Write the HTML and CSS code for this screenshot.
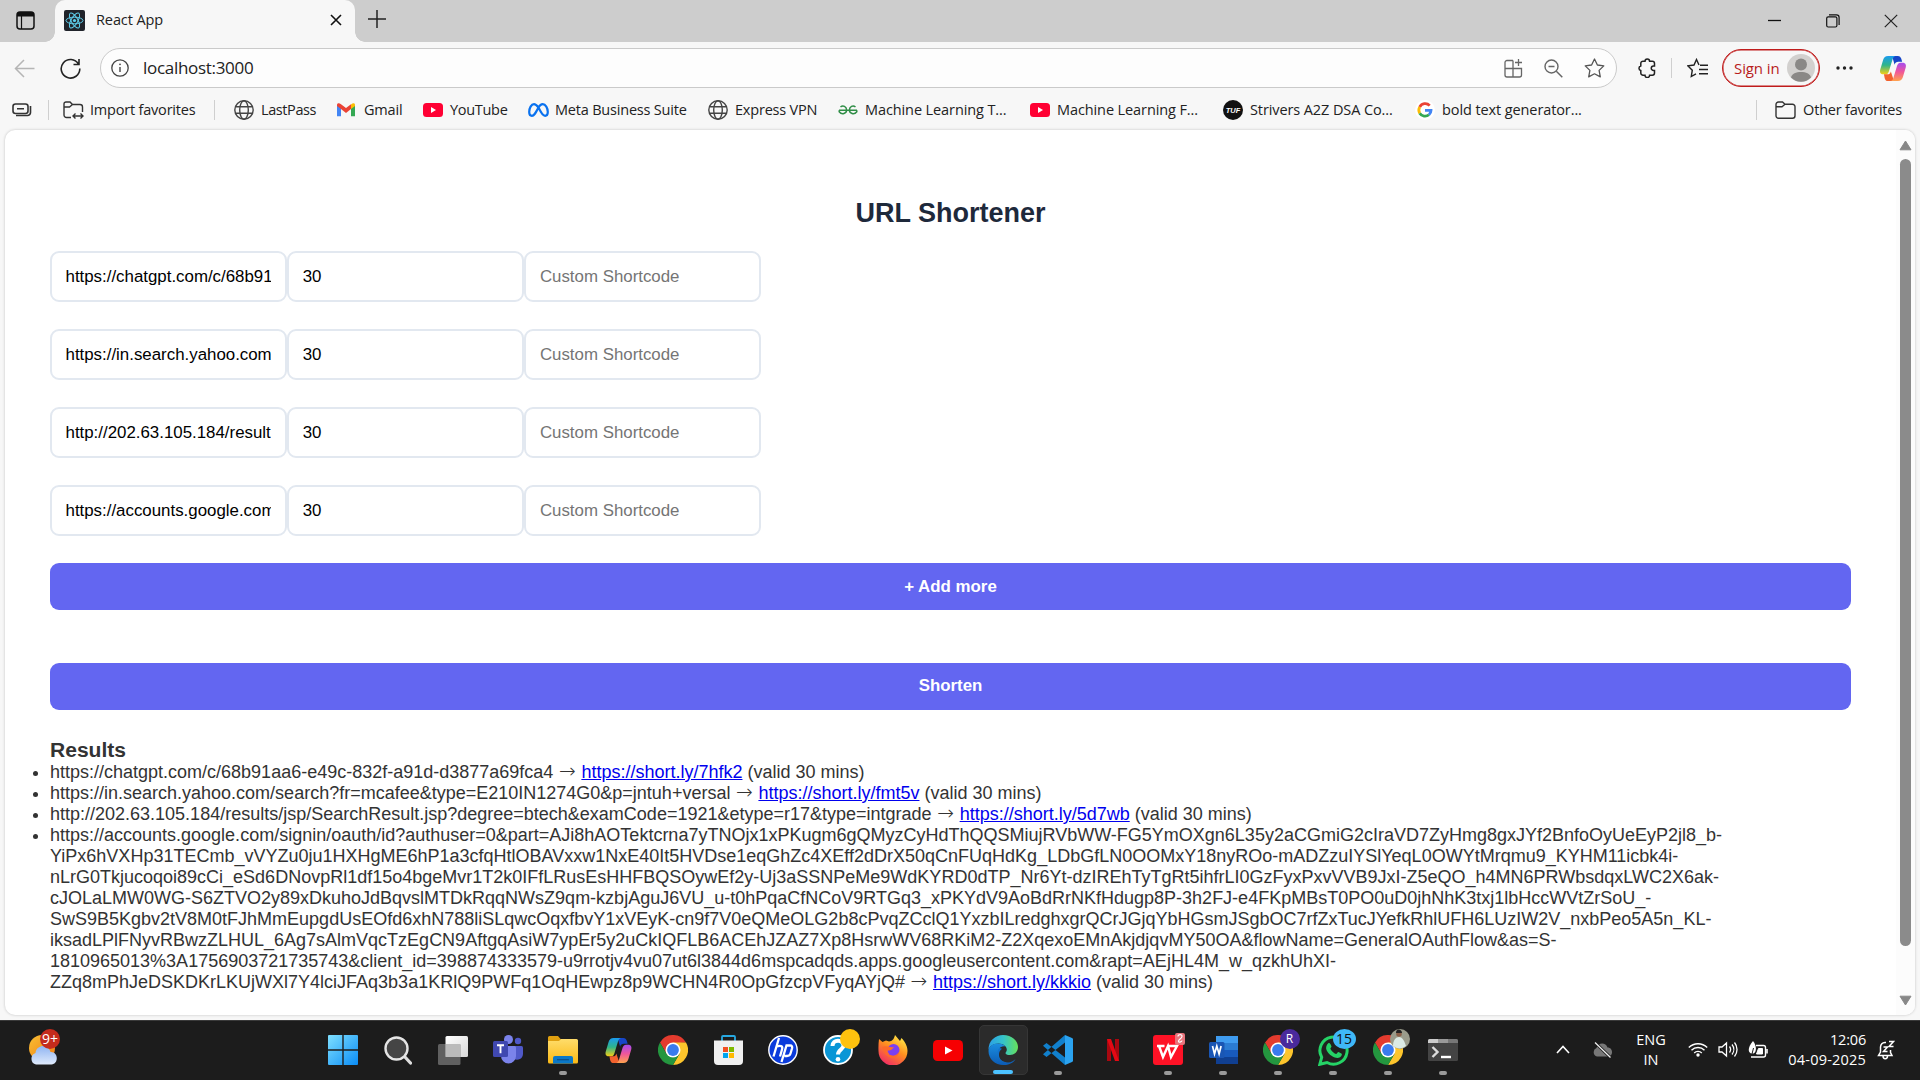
FILE: index.html
```html
<!DOCTYPE html>
<html lang="en">
<head>
<meta charset="utf-8">
<title>React App</title>
<link rel="stylesheet" href="styles.css">
</head>
<body>
<svg class="defs" width="0" height="0">
  <defs>
    <linearGradient id="cp1" x1="0" y1="0" x2="0" y2="1"><stop offset="0" stop-color="#1a9bf0"/><stop offset=".5" stop-color="#2fb58a"/><stop offset="1" stop-color="#f5cf14"/></linearGradient>
    <linearGradient id="cp2" x1="0" y1="0" x2="0" y2="1"><stop offset="0" stop-color="#a44bf0"/><stop offset=".5" stop-color="#f0569a"/><stop offset="1" stop-color="#ffa34d"/></linearGradient>
    <linearGradient id="win" x1="0" y1="0" x2="1" y2="1"><stop offset="0" stop-color="#7fe0ff"/><stop offset="1" stop-color="#0a8cf5"/></linearGradient>
    <linearGradient id="fold" x1="0" y1="0" x2="0" y2="1"><stop offset="0" stop-color="#ffdd6b"/><stop offset="1" stop-color="#fbb915"/></linearGradient>
    <linearGradient id="sun" x1="0" y1="0" x2="1" y2="1"><stop offset="0" stop-color="#f8c035"/><stop offset="1" stop-color="#f07a12"/></linearGradient>
    <linearGradient id="cloud" x1="0" y1="0" x2="0" y2="1"><stop offset="0" stop-color="#8fb4f2"/><stop offset="1" stop-color="#dfeafc"/></linearGradient>
    <linearGradient id="edg" x1="0" y1=".3" x2="1" y2=".3"><stop offset="0" stop-color="#2b9fe8"/><stop offset=".5" stop-color="#35c3ca"/><stop offset="1" stop-color="#66e05a"/></linearGradient>
    <linearGradient id="edb" x1="0" y1="0" x2="0" y2="1"><stop offset="0" stop-color="#1b8ee0"/><stop offset="1" stop-color="#0c5bb4"/></linearGradient>
    <linearGradient id="ff" x1=".8" y1="0" x2=".2" y2="1"><stop offset="0" stop-color="#fff04a"/><stop offset=".45" stop-color="#ff8f1f"/><stop offset="1" stop-color="#f0246a"/></linearGradient>
    <linearGradient id="tv" x1="0" y1="0" x2="1" y2="1"><stop offset="0" stop-color="#fff"/><stop offset="1" stop-color="#d8d8d8"/></linearGradient>
    <symbol id="copilot" viewBox="0 0 28 28">
      <path d="M13 1h6c2 0 3 1 3.600 3l.9 3h-4c-2 0-3.200 1-3.800 3L13 1z" fill="#1746c8"/>
      <path d="M9 1h7.500c-1.500.4-2.300 1.500-2.800 3l-4 13c-.7 2-1.700 3-3.500 3H4c-3 0-4-2.300-3.200-5l3-10C4.600 2.500 6 1 9 1z" fill="url(#cp1)"/>
      <path d="M15 27H9c-2 0-3-1-3.600-3L4.600 20h3.600c2 0 3-1 3.600-3L15 27z" fill="#f2622e"/>
      <path d="M19 27h-7.500c1.500-.4 2.300-1.500 2.800-3l4-13c.7-2 1.700-3 3.500-3H24c3 0 4 2.300 3.200 5l-3 10c-.8 2.500-2.200 4-5.200 4z" fill="url(#cp2)"/>
    </symbol>
    <symbol id="globe" viewBox="0 0 20 20"><g fill="none" stroke="#444" stroke-width="1.400"><circle cx="10" cy="10" r="9.200"/><ellipse cx="10" cy="10" rx="4.300" ry="9.200"/><path d="M1.600 6.700h16.800M1.600 13.300h16.800"/></g></symbol>
    <symbol id="yt" viewBox="0 0 20 14"><rect width="20" height="14" rx="3.500" fill="#ff0033"/><path d="M8 4l5 3-5 3z" fill="#fff"/></symbol>
    <symbol id="chrome" viewBox="0 0 30 30">
      <path d="M2 7.500A15 15 0 0 1 28 7.500L15 8.500 8.500 18.700z" fill="#e33b2e"/>
      <path d="M28 7.500A15 15 0 0 1 15 30L21.500 18.700 15 7.500z" fill="#fdc52c"/>
      <path d="M15 30A15 15 0 0 1 2 7.500L8.500 18.700 15 22.500 21.500 18.700z" fill="#24963f"/>
      <circle cx="15" cy="15" r="7.500" fill="#fff"/><circle cx="15" cy="15" r="5.900" fill="#3a7bee"/>
    </symbol>
  </defs>
</svg>

<div class="screen">
<header class="tabs">
  <div class="tab-actions"><svg width="19" height="19" viewBox="0 0 19 19"><rect x="1" y="1" width="17" height="17" rx="3" fill="none" stroke="#111" stroke-width="1.500"/><path d="M1 5V4a3 3 0 0 1 3-3h11a3 3 0 0 1 3 3v1.500H1z" fill="#111"/><path d="M5.500 5v13" stroke="#111" stroke-width="1.200"/></svg></div>
  <div class="tab">
    <svg class="favicon" width="21" height="21" viewBox="0 0 21 21"><rect width="21" height="21" rx="2" fill="#20232a"/><g fill="none" stroke="#5fd0ee" stroke-width="1"><ellipse cx="10.500" cy="10.500" rx="8.500" ry="3.300"/><ellipse cx="10.500" cy="10.500" rx="8.500" ry="3.300" transform="rotate(60 10.500 10.500)"/><ellipse cx="10.500" cy="10.500" rx="8.500" ry="3.300" transform="rotate(120 10.500 10.500)"/></g><circle cx="10.500" cy="10.500" r="1.600" fill="#5fd0ee"/></svg>
    <span class="tab-title">React App</span>
    <svg width="12" height="12" viewBox="0 0 12 12"><path d="M1 1l10 10M11 1L1 11" stroke="#111" stroke-width="1.600"/></svg>
  </div>
  <svg class="plus" width="18" height="18" viewBox="0 0 18 18"><path d="M9 0v18M0 9h18" stroke="#222" stroke-width="1.500"/></svg>
  <div class="win-controls">
    <svg width="14" height="14" viewBox="0 0 14 14"><path d="M0 6.500h13" stroke="#111" stroke-width="1.300"/></svg>
    <svg width="14" height="14" viewBox="0 0 14 14"><path d="M3 .8h7.500a2.600 2.600 0 0 1 2.600 2.600V11" fill="none" stroke="#111" stroke-width="1.200"/><rect x=".7" y="2.800" width="10.200" height="10.200" rx="1.500" fill="none" stroke="#111" stroke-width="1.200"/></svg>
    <svg width="14" height="14" viewBox="0 0 14 14"><path d="M.8.800l12.400 12.400M13.200.800L.8 13.200" stroke="#222" stroke-width="1.200"/></svg>
  </div>
</header>

<nav class="toolbar">
  <svg class="back" width="21" height="19" viewBox="0 0 21 19"><path d="M10 1L1.500 9.500 10 18M1.500 9.500H20.500" fill="none" stroke="#b5b5b5" stroke-width="1.500"/></svg>
  <svg class="reload" width="21" height="21" viewBox="0 0 21 21"><path d="M18.500 6A9.300 9.300 0 1 0 19.800 10.500M19 1v5.500h-5.500" fill="none" stroke="#222" stroke-width="1.600"/></svg>
  <div class="address">
    <svg width="18" height="18" viewBox="0 0 18 18"><circle cx="9" cy="9" r="8.200" fill="none" stroke="#444" stroke-width="1.300"/><path d="M9 8v5" stroke="#444" stroke-width="1.400"/><circle cx="9" cy="5.300" r=".9" fill="#444"/></svg>
    <span class="url">localhost:3000</span>
    <div class="address-icons">
      <svg width="19" height="19" viewBox="0 0 19 19"><path d="M9 1.500H3a2 2 0 0 0-2 2V16a2 2 0 0 0 2 2h12.500a2 2 0 0 0 2-2v-6.500H1M9 1.500V18M14.500 0v7M11 3.500h7" fill="none" stroke="#666" stroke-width="1.300"/></svg>
      <svg width="19" height="19" viewBox="0 0 19 19"><circle cx="7.500" cy="7.500" r="6.500" fill="none" stroke="#666" stroke-width="1.400"/><path d="M4.500 7.500h6M12.300 12.300l6 6" stroke="#666" stroke-width="1.500"/></svg>
      <svg width="21" height="20" viewBox="0 0 21 20"><path d="M10.500 1l2.900 6 6.400.9-4.700 4.500 1.200 6.500-5.800-3.100-5.800 3.100 1.200-6.500L1.200 7.900l6.400-.9z" fill="none" stroke="#555" stroke-width="1.300" stroke-linejoin="round"/></svg>
    </div>
  </div>
  <svg class="puzzle" width="20" height="20" viewBox="0 0 20 20"><path d="M8 3.200a2.300 2.300 0 0 1 4.600 0h2.700A2.200 2.200 0 0 1 17.500 5.400V8h-1a2.200 2.200 0 0 0 0 4.500h1V15a2.200 2.200 0 0 1-2.200 2.200h-2.700a2.300 2.300 0 0 1-4.600 0H6A2.200 2.200 0 0 1 3.800 15v-2.500a2.300 2.300 0 0 1 0-4.500V5.400A2.200 2.200 0 0 1 6 3.200z" fill="none" stroke="#222" stroke-width="1.500"/></svg>
  <i class="sep"></i>
  <svg class="favs" width="21" height="20" viewBox="0 0 21 20"><path d="M12 7L9.500 1.500 7 7 1 7.900l4.300 4.300-1 6.300L9 15.800M13 7.300h8M12 11.500h9M12 15.700h9" fill="none" stroke="#222" stroke-width="1.400"/></svg>
  <div class="signin"><span>Sign in</span><svg width="28" height="28" viewBox="0 0 28 28"><circle cx="14" cy="14" r="14" fill="#d2d0ce"/><circle cx="14" cy="10.500" r="6" fill="#8a8886"/><path d="M4 23.500C5 19.500 9 18 14 18s9 1.500 10 5.500a14 14 0 0 1-20 0z" fill="#8a8886"/></svg></div>
  <svg class="more" width="17" height="4" viewBox="0 0 17 4"><g fill="#222"><circle cx="2" cy="2" r="1.700"/><circle cx="8.500" cy="2" r="1.700"/><circle cx="15" cy="2" r="1.700"/></g></svg>
  <svg class="cp" width="28" height="27"><use href="#copilot"/></svg>
</nav>

<div class="bookmarks">
  <svg class="wallet" width="20" height="14" viewBox="0 0 20 14"><rect x="1" y="1" width="15" height="9.500" rx="2.500" fill="none" stroke="#333" stroke-width="1.600"/><path d="M5 5.800h7M18.500 3v6.500a3 3 0 0 1-3 3H4" fill="none" stroke="#333" stroke-width="1.600"/></svg>
  <i class="sep"></i>
  <div class="bm b1"><svg width="21" height="19" viewBox="0 0 21 19"><path d="M8 16.500H3.500a2.500 2.500 0 0 1-2.500-2.500V3a2 2 0 0 1 2-2h4l2.500 2.500H17A2.500 2.500 0 0 1 19.500 6v5M1 6h5.500L9.500 3.500" fill="none" stroke="#333" stroke-width="1.400"/><path d="M10 15h10M12.500 12.500L10 15l2.500 2.500M17.500 12.500L20 15l-2.500 2.500" fill="none" stroke="#333" stroke-width="1.400"/></svg><span>Import favorites</span></div>
  <i class="sep s2"></i>
  <div class="bm b2"><svg width="20" height="20"><use href="#globe"/></svg><span>LastPass</span></div>
  <div class="bm b3"><svg width="18" height="14" viewBox="0 0 18 14"><path d="M0 2v11.200h4V5z" fill="#4285f4"/><path d="M18 2v11.200h-4V5z" fill="#34a853"/><path d="M14 1.500V6l4-3V2c0-2-2-2.500-4-.5z" fill="#fbbc04"/><path d="M0 2C0 0 2-.5 4 1.200L9 5l5-3.800V6L9 10 4 6 0 3z" fill="#ea4335"/></svg><span>Gmail</span></div>
  <div class="bm b4"><svg width="20" height="14"><use href="#yt"/></svg><span>YouTube</span></div>
  <div class="bm b5"><svg width="21" height="14" viewBox="0 0 21 14"><path d="M10.500 4.500C8.500 2 7.300 1.200 6 1.200 3.300 1.200 1.200 5 1.200 9c0 2.500 1 3.800 2.700 3.800 2 0 3.300-2 6.600-8.300 1.300-2.300 2.700-3.300 4.200-3.300 2.800 0 5.100 3.700 5.100 7.800 0 2.500-1 3.800-2.700 3.800-2.200 0-3.600-2-6.600-8.300z" fill="none" stroke="#0a72ef" stroke-width="2.200"/></svg><span>Meta Business Suite</span></div>
  <div class="bm b6"><svg width="20" height="20"><use href="#globe"/></svg><span>Express VPN</span></div>
  <div class="bm b7"><svg width="20" height="10" viewBox="0 0 20 10"><path d="M1 5.200h18M2.500 2C5-.2 8.600 1.500 8.600 5S4 10.300 1.200 6.800V5.200M17.500 2C15-.2 11.400 1.500 11.400 5s4.600 5.300 7.400 1.800V5.200" fill="none" stroke="#2f8d46" stroke-width="1.500"/></svg><span>Machine Learning T...</span></div>
  <div class="bm b8"><svg width="20" height="14"><use href="#yt"/></svg><span>Machine Learning F...</span></div>
  <div class="bm b9"><svg width="20" height="20" viewBox="0 0 20 20"><circle cx="10" cy="10" r="10" fill="#111"/><text x="10" y="12.700" text-anchor="middle" font-family="Liberation Sans" font-weight="bold" font-style="italic" font-size="7.500" fill="#fff">TUF</text></svg><span>Strivers A2Z DSA Co...</span></div>
  <div class="bm b10"><svg width="20" height="20" viewBox="0 0 20 20"><circle cx="10" cy="10" r="10" fill="#fff"/><g fill="none" stroke-width="2.800"><path d="M14.700 5.600A6.200 6.200 0 0 0 4.700 7" stroke="#ea4335"/><path d="M4.700 7a6.200 6.200 0 0 0 0 6.200" stroke="#fbbc05"/><path d="M4.700 13.200a6.200 6.200 0 0 0 9.300 1.500" stroke="#34a853"/><path d="M14 14.700a6 6 0 0 0 2-4.300h-6" stroke="#4285f4"/></g></svg><span>bold text generator...</span></div>
  <div class="bm-end"><i class="sep"></i><svg width="21" height="18" viewBox="0 0 21 18"><path d="M1 3.500A2.500 2.500 0 0 1 3.500 1h4L10 3.200h7.500A2.500 2.500 0 0 1 20 5.700v9a2.500 2.500 0 0 1-2.500 2.500h-14A2.500 2.500 0 0 1 1 14.700zM1 5.700h6L10 3.200" fill="none" stroke="#333" stroke-width="1.400"/></svg><span>Other favorites</span></div>
</div>

<div class="viewport">
  <main class="page">
    <h2>URL Shortener</h2>
    <div class="row"><input value="https://chatgpt.com/c/68b91aa6-e49c"><input value="30"><input placeholder="Custom Shortcode"></div>
    <div class="row"><input value="https://in.search.yahoo.com/search"><input value="30"><input placeholder="Custom Shortcode"></div>
    <div class="row"><input value="http://202.63.105.184/results/jsp"><input value="30"><input placeholder="Custom Shortcode"></div>
    <div class="row"><input value="https://accounts.google.com/signin"><input value="30"><input placeholder="Custom Shortcode"></div>
    <button class="add">+ Add more</button>
    <button class="shorten">Shorten</button>
    <h3>Results</h3>
    <ul>
      <li>https://chatgpt.com/c/68b91aa6-e49c-832f-a91d-d3877a69fca4 <span class="arrow">→</span> <a href="#">https://short.ly/7hfk2</a> (valid 30 mins)</li>
      <li>https://in.search.yahoo.com/search?fr=mcafee&amp;type=E210IN1274G0&amp;p=jntuh+versal <span class="arrow">→</span> <a href="#">https://short.ly/fmt5v</a> (valid 30 mins)</li>
      <li>http://202.63.105.184/results/jsp/SearchResult.jsp?degree=btech&amp;examCode=1921&amp;etype=r17&amp;type=intgrade <span class="arrow">→</span> <a href="#">https://short.ly/5d7wb</a> (valid 30 mins)</li>
      <li>https://accounts.google.com/signin/oauth/id?authuser=0&amp;part=AJi8hAOTektcrna7yTNOjx1xPKugm6gQMyzCyHdThQQSMiujRVbWW-FG5YmOXgn6L35y2aCGmiG2cIraVD7ZyHmg8gxJYf2BnfoOyUeEyP2jl8_b-<br>YiPx6hVXHp31TECmb_vVYZu0ju1HXHgME6hP1a3cfqHtlOBAVxxw1NxE40It5HVDse1eqGhZc4XEff2dDrX50qCnFUqHdKg_LDbGfLN0OOMxY18nyROo-mADZzuIYSlYeqL0OWYtMrqmu9_KYHM11icbk4i-<br>nLrG0Tkjucoqoi89cCi_eSd6DNovpRl1df15o4bgeMvr1T2k0IFfLRusEsHHFBQSOywEf2y-Uj3aSSNPeMe9WdKYRD0dTP_Nr6Yt-dzIREhTyTgRt5ihfrLI0GzFyxPxvVVB9JxI-Z5eQO_h4MN6PRWbsdqxLWC2X6ak-<br>cJOLaLMW0WG-S6ZTVO2y89xDkuhoJdBqvslMTDkRqqNWsZ9qm-kzbjAguJ6VU_u-t0hPqaCfNCoV9RTGq3_xPKYdV9AoBdRrNKfHdugp8P-3h2FJ-e4FKpMBsT0PO0uD0jhNhK3txj1lbHccWVtZrSoU_-<br>SwS9B5Kgbv2tV8M0tFJhMmEupgdUsEOfd6xhN788liSLqwcOqxfbvY1xVEyK-cn9f7V0eQMeOLG2b8cPvqZCclQ1YxzbILredghxgrQCrJGjqYbHGsmJSgbOC7rfZxTucJYefkRhlUFH6LUzIW2V_nxbPeo5A5n_KL-<br>iksadLPlFNyvRBwzZLHUL_6Ag7sAlmVqcTzEgCN9AftgqAsiW7ypEr5y2uCkIQFLB6ACEhJZAZ7Xp8HsrwWV68RKiM2-Z2XqexoEMnAkjdjqvMY50OA&amp;flowName=GeneralOAuthFlow&amp;as=S-<br>1810965013%3A1756903721735743&amp;client_id=398874333579-u9rrotjv4vu07ut6l3844d6mspcadqds.apps.googleusercontent.com&amp;rapt=AEjHL4M_w_qzkhUhXI-<br>ZZq8mPhJeDSKDKrLKUjWXl7Y4lciJFAq3b3a1KRlQ9PWFq1OqHEwpz8p9WCHN4R0OpGfzcpVFyqAYjQ# <span class="arrow">→</span> <a href="#">https://short.ly/kkkio</a> (valid 30 mins)</li>
    </ul>
  </main>
  <div class="scrollbar">
    <svg width="13" height="11" viewBox="0 0 13 11"><path d="M6.500 1L12 9.800H1z" fill="#888" stroke="#888" stroke-linejoin="round"/></svg>
    <i class="thumb"></i>
    <svg width="13" height="11" viewBox="0 0 13 11"><path d="M6.500 10L12 1.200H1z" fill="#888" stroke="#888" stroke-linejoin="round"/></svg>
  </div>
</div>

<footer class="taskbar">
  <div class="weather"><svg width="34" height="38" viewBox="0 0 34 38"><circle cx="13" cy="21" r="13" fill="url(#sun)"/><path d="M7 37.500a6 6 0 0 1-.5-11.500C7 21 11 19 14 19s6.500 2 7.500 6c8-.5 8.500 12 1 12.500z" fill="url(#cloud)"/></svg><span class="badge red">9+</span></div>
  <div class="apps">
    <div class="app"><svg width="30" height="30" viewBox="0 0 30 30"><path d="M0 1a1 1 0 0 1 1-1h13.300v14.300H0zM15.700 0H29a1 1 0 0 1 1 1v13.300H15.700zM0 15.700h14.300V30H1a1 1 0 0 1-1-1zM15.700 15.700H30V29a1 1 0 0 1-1 1H15.700z" fill="url(#win)"/></svg></div>
    <div class="app"><svg width="28" height="29" viewBox="0 0 28 29"><path d="M20 20l6.500 7" stroke="#ddd" stroke-width="3.300" stroke-linecap="round"/><circle cx="12.500" cy="12.500" r="11" fill="#454545" stroke="#e5e5e5" stroke-width="2.400"/></svg></div>
    <div class="app"><svg width="30" height="29" viewBox="0 0 30 29"><rect x="7.500" y="0" width="22.500" height="21" rx="1.500" fill="url(#tv)"/><rect x="0" y="8" width="22.500" height="21" rx="1.500" fill="#777" fill-opacity=".75"/><path d="M7.500 8h15v13h-15z" fill="#bbb"/></svg></div>
    <div class="app"><svg width="30" height="32" viewBox="0 0 30 32"><circle cx="25" cy="7" r="3.200" fill="#5059c9"/><circle cx="15.500" cy="5.500" r="4.500" fill="#7b83eb"/><path d="M20 12h8.500a1.500 1.500 0 0 1 1.500 1.500V20a6 6 0 0 1-9 5z" fill="#5059c9"/><path d="M8 12h13.500a1.500 1.500 0 0 1 1.500 1.500V22a7.500 7.500 0 0 1-15 0z" fill="#7b83eb"/><rect y="7" width="15" height="16" rx="1.500" fill="#4048b0"/><path d="M4 11.200h7M7.500 11.200v8" stroke="#fff" stroke-width="1.900"/></svg></div>
    <div class="app run"><svg width="30" height="28" viewBox="0 0 30 28"><path d="M0 1.500A1.500 1.500 0 0 1 1.500 0H10l3 3.500V9H0z" fill="#e0a010"/><path d="M0 5h11l2-2h15.500A1.500 1.500 0 0 1 30 4.500V26a1.500 1.500 0 0 1-1.500 1.500h-27A1.500 1.500 0 0 1 0 26z" fill="url(#fold)"/><path d="M5 27.500V22a2 2 0 0 1 2-2h16a2 2 0 0 1 2 2v5.500z" fill="#0a78c8"/><path d="M9 23.700h12" stroke="#0c4f88" stroke-width="1.200"/></svg></div>
    <div class="app"><svg width="29" height="27"><use href="#copilot"/></svg></div>
    <div class="app"><svg width="30" height="30"><use href="#chrome"/></svg></div>
    <div class="app"><svg width="29" height="30" viewBox="0 0 29 30"><path d="M8 6V2a1 1 0 0 1 1-1h11a1 1 0 0 1 1 1v4" fill="none" stroke="#27a9e1" stroke-width="1.800"/><path d="M0 5.500h29V26a4 4 0 0 1-4 4H4a4 4 0 0 1-4-4z" fill="#f0f0f0"/><path d="M9 12h5v5H9z" fill="#f25022"/><path d="M15 12h5v5h-5z" fill="#7fba00"/><path d="M9 18h5v5H9z" fill="#00a4ef"/><path d="M15 18h5v5h-5z" fill="#ffb900"/></svg></div>
    <div class="app"><svg width="30" height="30" viewBox="0 0 30 30"><circle cx="15" cy="15" r="14.200" fill="#0b3bdc" stroke="#fff" stroke-width="1.400"/><path d="M11 3L5.500 21.500M8.500 11.500c5-1.500 6.500 0 5.500 3L12 21.500M13.500 27l5-16.500h3.500c2 0 2.500 1 2 3l-1.500 5c-.5 1.800-1.500 2.500-3.500 2.500h-2.500" fill="none" stroke="#fff" stroke-width="2.300"/></svg></div>
    <div class="app"><svg width="30" height="30" viewBox="0 0 30 30"><circle cx="15" cy="15" r="14" fill="#0a96d6" stroke="#fff" stroke-width="1.800"/><path d="M9.500 11c0-7 11-7 11-.5 0 4-5.500 4-5.500 9" fill="none" stroke="#fff" stroke-width="4"/><circle cx="15" cy="24.300" r="2.300" fill="#fff"/></svg><span class="badge amber"></span></div>
    <div class="app"><svg width="30" height="30" viewBox="0 0 30 30"><path d="M1 4l3.500 3L8 5.500l3 1C14 6 16 4.500 17 0l5 6 1.500-3C28 8 29.500 12 29.500 16a14.300 14.300 0 0 1-29 0C.3 12 .5 8 1 4z" fill="url(#ff)"/><circle cx="15.500" cy="15" r="6" fill="#7b3ff2"/><path d="M4 12c5-2 7 1 12 0-3 5-7 3-8 4 2 6 10 6 13 1-1 8-13 9-17-5z" fill="#ff6a2a"/></svg></div>
    <div class="app"><svg width="30" height="21" viewBox="0 0 30 21"><rect width="30" height="21" rx="4.500" fill="#f60002"/><path d="M12 6.500l7.500 4-7.500 4z" fill="#fff"/></svg></div>
    <div class="app active"><svg width="30" height="30" viewBox="0 0 30 30"><path d="M1 15A14.500 14.500 0 0 0 22 28c-7 1-11-4-11-8 0-5 3-6 3-6S3 8 1 15z" fill="#1173cf"/><path d="M.5 16C0 5 8 0 15 0c9 0 15 6 15 12 0 5-4 8-8 8-3 0-4.500-1-4.500-1.800 0-1 1.300-1.400 1.300-3.700 0-3-3.500-6-8.300-6C5 8.500.5 12 .5 16z" fill="url(#edg)"/><path d="M.5 16C1 11 5 8.500 10 8.500c3 0 6 1 7.500 3C12 10.500 9.500 15 9.500 18c0 6 5.500 9.500 10.500 9.500 3.500 0 6-2 7.500-3.500-2 4-7 6-12 6C7 30 .5 24 .5 16z" fill="url(#edb)"/></svg></div>
    <div class="app run"><svg width="30" height="30" viewBox="0 0 30 30"><path d="M22 0l7 3a1.500 1.500 0 0 1 1 1.500v21a1.500 1.500 0 0 1-1 1.500l-7 3z" fill="#2ba3f0"/><path d="M22 7.500L3.500 22 0 19.300 22 0zM22 22.500L3.500 8 0 10.700 22 30z" fill="#1180cc"/></svg></div>
    <div class="app"><svg width="12" height="22" viewBox="0 0 12 22"><path d="M0 0h4v22H0zM8 0h4v22H8z" fill="#a90810"/><path d="M0 0h4l8 22H8z" fill="#e50914"/></svg></div>
    <div class="app run"><svg width="30" height="30" viewBox="0 0 30 30"><rect width="30" height="30" rx="3" fill="#ff1226"/><path d="M4 11h7.500M6 11l4 11 5-11 3 11 6-11h-9" fill="none" stroke="#fff" stroke-width="2.400"/></svg><span class="wps"><svg width="10" height="12" viewBox="0 0 10 12"><path d="M3 3.500C3 1 7.500 1 7 3.500S4 6 3.500 8 7 9 7 7.500" fill="none" stroke="#fff" stroke-width="1.200"/></svg></span></div>
    <div class="app run"><svg width="29" height="28" viewBox="0 0 29 28"><path d="M7 0h22v7H7z" fill="#3f9cf0"/><path d="M7 7h22v7H7z" fill="#2b7cd3"/><path d="M7 14h22v7H7z" fill="#185abd"/><path d="M7 21h22v7H7z" fill="#103f91"/><rect y="6" width="15.500" height="16" rx="1.500" fill="#1a56b4"/><path d="M3.500 10l2 8 2.300-8 2.300 8 2-8" fill="none" stroke="#fff" stroke-width="1.700"/></svg></div>
    <div class="app run"><svg width="30" height="30"><use href="#chrome"/></svg><span class="badge purple">R</span></div>
    <div class="app run"><svg width="31" height="31" viewBox="0 0 31 31"><path d="M1.800 29.300l1.900-7A13.600 13.600 0 1 1 9 27.500z" fill="#20221f" stroke="#25d366" stroke-width="3"/><path d="M10 8.500c1.500-1.300 2.500 0 3.500 3-.5 1.500-1.500 1.500-1 2.500 1.500 2.500 3 4 5.500 5 1 0 1.500-2 2.500-2 3 1.500 3.700 1.800 3.300 3-1 3-4.300 3.500-7 2.500-5-2-7-5-8.300-7.500-1-2.500 0-5 1.500-6.500z" fill="#25d366"/></svg><span class="badge blue">15</span></div>
    <div class="app run"><svg width="30" height="30"><use href="#chrome"/></svg><span class="badge photo"><svg width="20" height="20" viewBox="0 0 20 20"><circle cx="10" cy="10" r="10" fill="#9a9c8b"/><path d="M3 17c0-6 3-9 6-9s5 3 7 9a10 10 0 0 1-13 0z" fill="#dcebe5"/><circle cx="9" cy="5" r="2.800" fill="#8b6048"/><path d="M6 4c0-5 6-4 6 0z" fill="#222"/></svg></span></div>
    <div class="app run"><svg width="30" height="22" viewBox="0 0 30 22"><rect width="30" height="22" rx="1.500" fill="#444"/><path d="M0 4V1.500A1.500 1.500 0 0 1 1.500 0H10v4z" fill="#ccc"/><path d="M10 0h10v4H10z" fill="#999"/><path d="M20 0h8.500A1.500 1.500 0 0 1 30 1.500V4H20z" fill="#777"/><path d="M4.500 8l5 5-5 5" fill="none" stroke="#ddd" stroke-width="2.400"/><path d="M13 18h10" stroke="#fff" stroke-width="2.400"/></svg></div>
  </div>
  <div class="tray">
    <svg class="chev" width="14" height="9" viewBox="0 0 14 9"><path d="M1 8l6-6.500L13 8" fill="none" stroke="#fff" stroke-width="1.600"/></svg>
    <svg class="cloud" width="21" height="16" viewBox="0 0 21 16"><path d="M5 14.500a4.500 4.500 0 0 1-.5-8.500C6 0 14 0 15.500 5.500c6 0 6 9 .5 9z" fill="#777"/><path d="M3 .5L18.500 15.500" stroke="#1c1c1c" stroke-width="3"/><path d="M3 .5L18.500 15.500" stroke="#eee" stroke-width="1.300"/></svg>
    <div class="lang"><span>ENG</span><span>IN</span></div>
    <svg class="wifi" width="20" height="15" viewBox="0 0 20 15"><g fill="none" stroke="#fff" stroke-width="1.400"><path d="M.8 5.500a13 13 0 0 1 18.400 0M3.500 8.200a9.200 9.200 0 0 1 13 0M6.200 10.900a5.400 5.400 0 0 1 7.600 0"/></g><circle cx="10" cy="13" r="1.700" fill="#fff"/></svg>
    <svg class="vol" width="21" height="17" viewBox="0 0 21 17"><path d="M1 6v5h3l4.500 4V2L4 6zM11.500 5.500a5 5 0 0 1 0 6M14 3.500a8 8 0 0 1 0 10M16.500 1.500a11 11 0 0 1 0 14" fill="none" stroke="#fff" stroke-width="1.300"/></svg>
    <svg class="bat" width="20" height="18" viewBox="0 0 20 18"><path d="M8 4.500h7.500a2 2 0 0 1 2 2v7.500a2 2 0 0 1-2 2H3" fill="none" stroke="#fff" stroke-width="1.400"/><path d="M19 8v4.500" stroke="#fff" stroke-width="1.600"/><path d="M10.500 7.500h4v5.500H8.500z" fill="#fff" stroke="#fff"/><path d="M5 0C8.500 4 9 11 5.500 12.500H3C-.5 11 0 6 5 0z" fill="#fff"/><path d="M3.500 15l2-8" stroke="#1c1c1c" stroke-width="1"/></svg>
    <div class="clock"><span>12:06</span><span class="date">04-09-2025</span></div>
    <svg class="bell" width="18" height="20" viewBox="0 0 18 20"><path d="M9 2.500H8A5 5 0 0 0 3.500 7v5L1.500 15.500h13.500l-1.500-3V10M6 16c0 3.500 4.500 3.500 4.500 0M6.500 7h4l-4 4.500h4M12 1.500h4.500L12 6.500h4.500" fill="none" stroke="#fff" stroke-width="1.500"/></svg>
  </div>
</footer>
</div>
</body>
</html>
```
FILE: styles.css
```css
* { box-sizing: border-box; }
body { margin: 0; background: #f7f7f7; font-family: "Open Sans", "Noto Sans", sans-serif; color: #222; overflow: hidden; }
svg { display: block; flex: none; }
.defs { position: absolute; }
.screen { width: 1920px; height: 1080px; display: flex; flex-direction: column; }

/* tab strip */
.tabs { height: 42px; background: #cdcdcd; display: flex; flex: none; }
.tab-actions { width: 55px; padding: 11px 0 0 16px; }
.tab { width: 300px; background: #f7f7f7; border-radius: 10px 10px 0 0; display: flex; align-items: center; padding: 0 13px 2px 9px; position: relative; }
.tab::before, .tab::after { content: ""; position: absolute; bottom: 0; width: 10px; height: 10px; }
.tab::before { left: -10px; background: radial-gradient(circle at 0 0, #cdcdcd 9.500px, #f7f7f7 10px); }
.tab::after { right: -10px; background: radial-gradient(circle at 100% 0, #cdcdcd 9.500px, #f7f7f7 10px); }
.tab-title { font-size: 14.500px; margin-left: 11px; padding-bottom: 2px; flex: 1; letter-spacing: -.1px; }
.plus { margin: 10px 0 0 13px; }
.win-controls { margin-left: auto; display: flex; gap: 44px; padding: 14px 22px 0 0; }

/* toolbar */
.toolbar { height: 52px; flex: none; display: flex; align-items: center; padding: 0 13px 0 14px; }
.reload { margin-left: 25px; }
.address { margin-left: 19px; width: 1517px; height: 40px; border: 1px solid #cacaca; border-radius: 20px; background: #fdfdfd; display: flex; align-items: center; padding: 0 11px 0 10px; }
.url { font-size: 17px; margin-left: 14px; padding-bottom: 2px; letter-spacing: -.3px; }
.address-icons { margin-left: auto; display: flex; align-items: center; gap: 21px; }
.puzzle { margin-left: 20px; }
.sep { width: 1px; height: 20px; background: #cfcfcf; flex: none; }
.toolbar .sep { margin-left: 14px; }
.favs { margin-left: 15px; }
.signin { margin-left: 14px; width: 98px; height: 38px; border: 1px solid #c01c1c; box-shadow: inset 0 0 0 .5px #c01c1c; border-radius: 19px; display: flex; align-items: center; justify-content: space-between; padding: 0 4px 0 11px; font-size: 15px; color: #b81c1c; letter-spacing: -.1px; white-space: nowrap; }
.signin span { padding-bottom: 1px; }
.more { margin-left: 16px; }
.cp { margin-left: auto; }

/* bookmarks */
.bookmarks { height: 36px; flex: none; display: flex; align-items: center; padding: 0 18px 4px 12px; font-size: 14.500px; white-space: nowrap; }
.bookmarks .sep { margin-left: 16px; }
.bm { display: flex; align-items: center; }
.b1 { margin-left: 14px; width: 151px; gap: 6px; }
.bookmarks .s2 { margin-left: 0; }
.b2 { margin-left: 19px; width: 103px; gap: 7px; }
.b3 { width: 86px; gap: 9px; }
.b4 { width: 105px; gap: 7px; }
.b5 { width: 180px; gap: 6px; }
.b6 { width: 130px; gap: 7px; }
.b7 { width: 192px; gap: 7px; }
.b8 { width: 193px; gap: 7px; }
.b9 { width: 192px; gap: 7px; }
.b10 { gap: 7px; }
.bm-end { margin-left: auto; display: flex; align-items: center; }
.bm-end svg { margin: 0 7px 0 18px; }
.bm span, .bm-end span { letter-spacing: -.2px; padding-bottom: 1px; }
.b2 span { letter-spacing: -.4px; }
.b4 span { letter-spacing: -.3px; }
.b7 span, .b8 span, .b9 span, .b10 span { letter-spacing: -.1px; }

/* web page */
.viewport { margin: 0 5px 5px; height: 885px; flex: none; background: #fff; border-radius: 10px; box-shadow: 0 0 3px rgba(0, 0, 0, .22); display: flex; overflow: hidden; }
.page { flex: 1; padding: 68px 45px 0; font-family: "Liberation Sans", Arial, sans-serif; font-size: 18px; line-height: 21px; color: #333; }
h2 { margin: 0 0 22px; font-size: 27px; line-height: 31px; text-align: center; color: #1e293b; }
.row { display: flex; gap: .5px; margin-bottom: 27px; }
.row input { width: 236.700px; height: 51px; border: 2px solid #e2e8f0; border-radius: 9px; padding: 13px 13.500px; font: 16.880px "Liberation Sans", Arial, sans-serif; color: #000; background: #fff; outline: none; }
.row input::placeholder { color: #757575; }
button { display: block; width: 100%; height: 47px; border: 0; border-radius: 9px; background: #6366f1; color: #fff; font: bold 16.880px "Liberation Sans", Arial, sans-serif; padding: 0; }
.shorten { margin-top: 53px; padding-bottom: 2px; }
h3 { margin: 28px 0 0; font-size: 21.060px; line-height: 24px; }
ul { margin: 0; padding: 0; white-space: nowrap; }
a { color: #00e; }
.arrow { display: inline-flex; justify-content: center; width: 18px; font-family: "DejaVu Sans", sans-serif; font-weight: 200; font-size: 20px; line-height: 0; }
.scrollbar { width: 19px; background: #fcfcfc; display: flex; flex-direction: column; align-items: center; padding: 10px 0 9px; }
.thumb { width: 11px; height: 787px; margin: 8px 0 auto; border-radius: 6px; background: #8b8b8b; }

/* taskbar */
.taskbar { height: 60px; flex: none; background: #1c1c1c; border-top: 1px solid #3a3a3a; display: flex; color: #fff; }
.weather { width: 318.500px; padding: 6px 0 0 29px; position: relative; }
.badge { position: absolute; border-radius: 50%; display: flex; align-items: center; justify-content: center; width: 20px; height: 20px; font-size: 14px; line-height: 1; }
.red { left: 40px; top: 8px; background: #c42b1c; }
.apps { display: flex; align-items: center; gap: 6px; padding-bottom: 1px; }
.app { width: 49px; height: 50px; display: flex; align-items: center; justify-content: center; position: relative; border-radius: 5px; }
.app::after { content: ""; position: absolute; bottom: 0; width: 8px; height: 4px; border-radius: 2px; }
.run::after { background: #9a9a9a; }
.active { background: #2b2b2b; border: 1px solid #363636; }
.active::after { width: 20px; background: #4cc2ff; }
.amber { right: 3px; top: 4px; background: #ffc20e; }
.purple { right: 3px; top: 4px; background: #4a2a9c; font-size: 12px; }
.blue { right: 2px; top: 4px; width: 23px; background: #3fb8f8; color: #111; }
.photo { right: 3px; top: 4px; }
.wps { position: absolute; right: 8px; top: 8px; background: #e8747c; border-radius: 2px; }
.tray { margin-left: auto; display: flex; align-items: center; font-size: 14.500px; line-height: 20px; padding: 0 25px 2px 0; }
.cloud { margin-left: 22px; }
.lang { margin-left: 18px; width: 40px; display: flex; flex-direction: column; align-items: center; }
.wifi { margin-left: 17px; }
.vol { margin-left: 10px; }
.bat { margin-left: 9px; }
.clock { margin-left: 12px; width: 86px; letter-spacing: -.2px; white-space: nowrap; display: flex; flex-direction: column; align-items: flex-end; }
.date { letter-spacing: .2px; }
.bell { margin-left: 11px; }
```
